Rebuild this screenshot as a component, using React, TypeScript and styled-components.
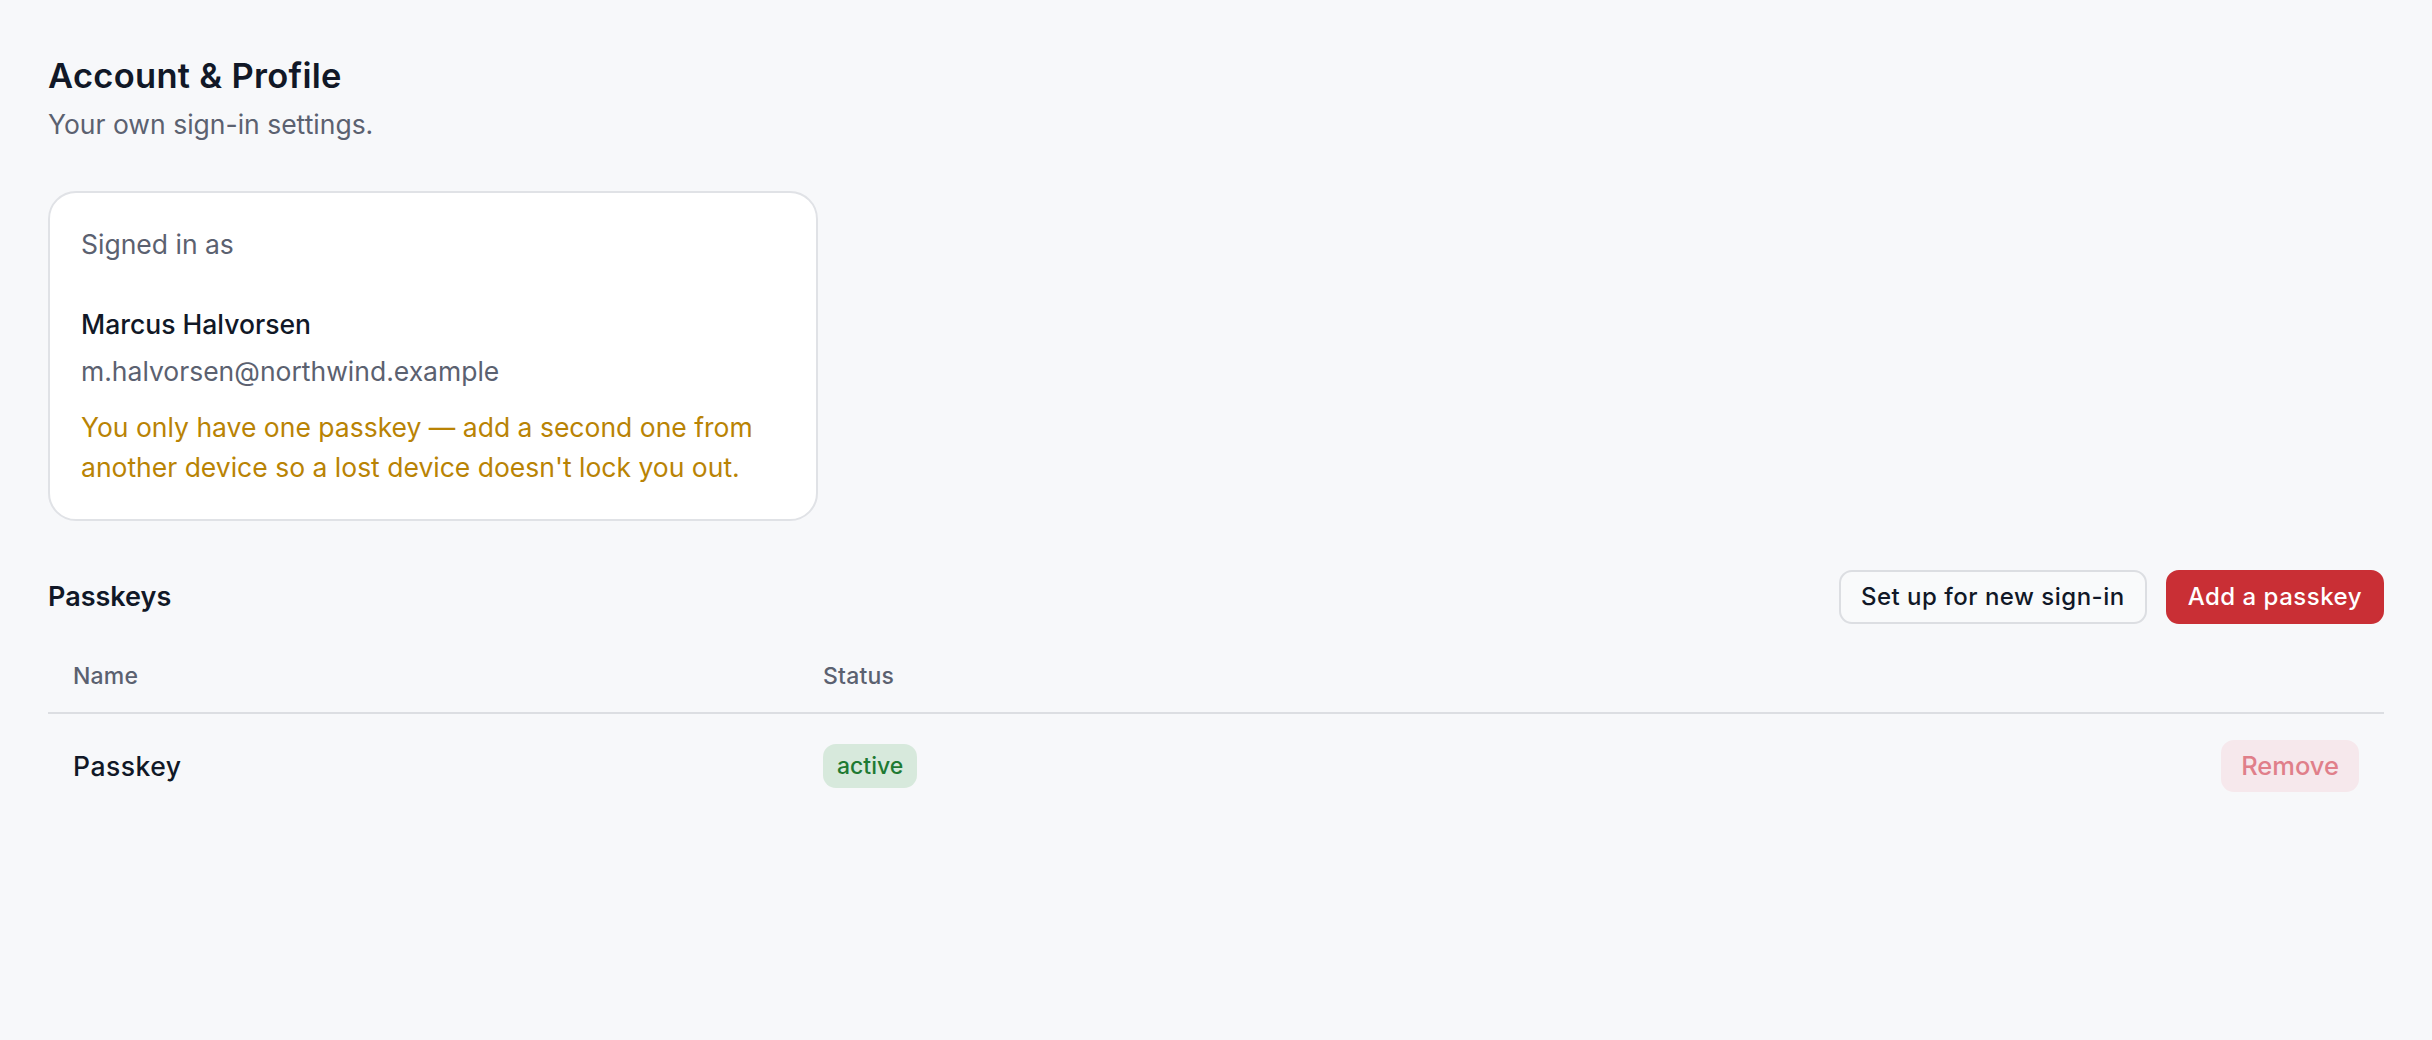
import React from 'react';
import styled, { createGlobalStyle } from 'styled-components';

const GlobalStyle = createGlobalStyle`
  * { box-sizing: border-box; }
  body {
    margin: 0;
    background: #f7f8fa;
    font-family: Inter, "Noto Sans", "Liberation Sans", sans-serif;
    color: #111827;
    -webkit-font-smoothing: antialiased;
  }
`;

const Page = styled.main`
  min-height: 100vh;
  padding: 56px 48px 48px;
`;

const Title = styled.h1`
  margin: 0;
  font-size: 34.5px;
  line-height: 40px;
  font-weight: 600;
  letter-spacing: 0.3px;
  color: #111827;
`;

const Subtitle = styled.p`
  margin: 8px 0 0;
  font-size: 26.5px;
  line-height: 40px;
  color: #5b6170;
`;

const Card = styled.section`
  width: 770px;
  margin-top: 47px;
  padding: 31px 31px 32px;
  background: #ffffff;
  border: 2px solid #e0e2e6;
  border-radius: 28px;
`;

const Text = styled.p<{ $tone?: 'muted' | 'strong' | 'warn'; $gap?: number }>`
  margin: ${({ $gap }) => $gap ?? 0}px 0 0;
  font-size: 26.5px;
  line-height: 40px;
  font-weight: ${({ $tone }) => ($tone === 'strong' ? 500 : 400)};
  color: ${({ $tone }) =>
    $tone === 'strong' ? '#111827' : $tone === 'warn' ? '#b98304' : '#5b6170'};
`;

const SectionHeader = styled.div`
  display: flex;
  align-items: center;
  justify-content: space-between;
  margin-top: 49px;
`;

const SectionTitle = styled.h2`
  margin: 0;
  font-size: 27px;
  line-height: 40px;
  font-weight: 600;
  color: #111827;
`;

const Actions = styled.div`
  display: flex;
  gap: 19px;
`;

const Button = styled.button<{ $variant?: 'primary' | 'outline' | 'danger' }>`
  font-family: inherit;
  font-size: 24px;
  line-height: 34px;
  font-weight: 500;
  letter-spacing: 0.5px;
  padding: 8px 20px;
  border-radius: 13px;
  cursor: pointer;
  border: 2px solid
    ${({ $variant }) =>
      $variant === 'primary' ? '#c92f35' : $variant === 'danger' ? '#f6e8ec' : '#dcdee2'};
  background: ${({ $variant }) =>
    $variant === 'primary' ? '#c92f35' : $variant === 'danger' ? '#f6e8ec' : '#f9fafb'};
  color: ${({ $variant }) =>
    $variant === 'primary' ? '#ffffff' : $variant === 'danger' ? '#e07f8a' : '#111827'};
`;

const RemoveButton = styled(Button)`
  font-size: 25.5px;
  line-height: 36px;
  letter-spacing: 0;
  padding: 6px 18px;
`;

const Table = styled.div`
  margin-top: 16px;
`;

const Row = styled.div<{ $head?: boolean }>`
  display: grid;
  grid-template-columns: 750px 1fr auto;
  align-items: center;
  border-bottom: ${({ $head }) => ($head ? '2px solid #dcdee2' : 'none')};
`;

const Cell = styled.div<{ $head?: boolean }>`
  padding: ${({ $head }) => ($head ? '19px 25px' : '26px 25px')};
  font-size: ${({ $head }) => ($head ? '23px' : '26.5px')};
  line-height: ${({ $head }) => ($head ? '34px' : '40px')};
  font-weight: 500;
  letter-spacing: ${({ $head }) => ($head ? '0.2px' : '0.5px')};
  color: ${({ $head }) => ($head ? '#5b6170' : '#111827')};
`;

const Badge = styled.span`
  display: inline-flex;
  align-items: center;
  height: 44px;
  padding: 0 14px;
  border-radius: 13px;
  background: #d7e9dc;
  color: #1e7a32;
  font-size: 23px;
  font-weight: 500;
  letter-spacing: 0;
  vertical-align: middle;
`;

const passkeys = [{ id: 1, name: 'Passkey', status: 'active' }];

export default function App() {
  return (
    <>
      <GlobalStyle />
      <Page>
        <Title>Account &amp; Profile</Title>
        <Subtitle>Your own sign-in settings.</Subtitle>

        <Card>
          <Text>Signed in as</Text>
          <Text $tone="strong" $gap={40}>
            Marcus Halvorsen
          </Text>
          <Text $gap={7}>m.halvorsen@northwind.example</Text>
          <Text $tone="warn" $gap={16}>
            You only have one passkey — add a second one from
            <br />
            another device so a lost device doesn't lock you out.
          </Text>
        </Card>

        <SectionHeader>
          <SectionTitle>Passkeys</SectionTitle>
          <Actions>
            <Button $variant="outline">Set up for new sign-in</Button>
            <Button $variant="primary">Add a passkey</Button>
          </Actions>
        </SectionHeader>

        <Table>
          <Row $head>
            <Cell $head>Name</Cell>
            <Cell $head>Status</Cell>
            <Cell $head />
          </Row>
          {passkeys.map((p) => (
            <Row key={p.id}>
              <Cell>{p.name}</Cell>
              <Cell>
                <Badge>{p.status}</Badge>
              </Cell>
              <Cell>
                <RemoveButton $variant="danger">Remove</RemoveButton>
              </Cell>
            </Row>
          ))}
        </Table>
      </Page>
    </>
  );
}
